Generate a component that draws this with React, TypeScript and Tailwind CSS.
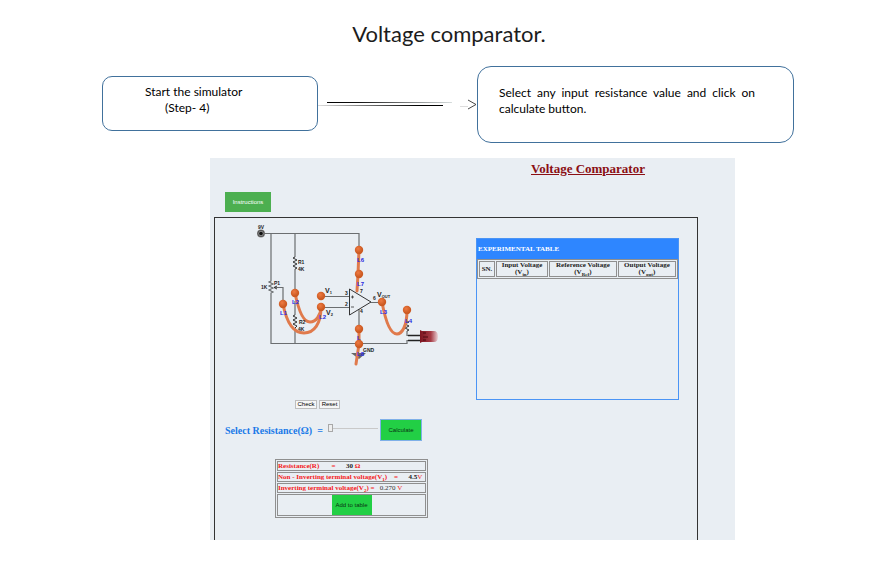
import React, { useState } from 'react';

const serif = "font-['Liberation_Serif',serif]";
const sans = "font-['Liberation_Sans',sans-serif]";
const humanist = "font-['Lato',sans-serif]";

const joints = [
  [359, 250],
  [359, 274],
  [295, 293],
  [283, 304],
  [321, 296],
  [321, 307],
  [382, 302],
  [407, 310],
  [359, 329],
  [359, 344],
];

function FlowArrow() {
  return (
    <svg className="block h-4 w-full" viewBox="318 96 159 16" preserveAspectRatio="none" aria-hidden="true">
      <defs>
        <linearGradient id="fadeOut">
          <stop offset="0" stopColor="#000" />
          <stop offset="0.25" stopColor="#111" />
          <stop offset="1" stopColor="#d8dede" />
        </linearGradient>
        <linearGradient id="fadeIn">
          <stop offset="0" stopColor="#ddd" />
          <stop offset="0.5" stopColor="#555" />
          <stop offset="0.8" stopColor="#000" />
        </linearGradient>
      </defs>
      <rect x="327" y="102" width="125" height="1" fill="url(#fadeOut)" />
      <rect x="318" y="105" width="125" height="1" fill="url(#fadeIn)" />
      <rect x="460" y="106" width="8" height="1" fill="#ddd" />
      <path d="M468 100l8 4.500l-8 4.500" fill="none" stroke="#333" strokeWidth="0.900" />
    </svg>
  );
}

function Circuit() {
  return (
    <svg
      className="block h-40 w-[200px] font-['Liberation_Sans',sans-serif]"
      viewBox="250 222 200 160"
      role="img"
      aria-label="Voltage comparator circuit"
    >
      <defs>
        <radialGradient id="joint" cx="0.4" cy="0.35">
          <stop offset="0" stopColor="#ee7a42" />
          <stop offset="1" stopColor="#cc5a22" />
        </radialGradient>
        <linearGradient id="led">
          <stop offset="0" stopColor="#7d1420" />
          <stop offset="0.6" stopColor="#a53a44" />
          <stop offset="1" stopColor="#e9d3d8" />
        </linearGradient>
      </defs>

      <g fill="none" stroke="#6b6e70" strokeWidth="1.200">
        <path d="M265 233.500H359V247" />
        <path d="M271 233V281l-2 1l4 2l-4 2l4 2l-4 2l4 2l-2 1V343.500H407V340.500H421" />
        <path d="M274 287.500H283V303" />
        <path d="M295 233V257M295 269V291M295 301V315M295 328V343" />
        <path d="M321 296.500H349M321 307.500H349M371 302.500H380M359 309V343" />
        <path d="M407 313V319M407 331V335.500H421" />
      </g>
      <g fill="none" stroke="#333" strokeWidth="1">
        <path d="M295 257l-2 1l4 2l-4 2l4 2l-4 2l4 2l-2 1" />
        <path d="M295 315l-2 1l4 2l-4 2l4 2l-4 2l4 2l-2 2" />
        <path d="M407 319l-2 1l4 2l-4 2l4 2l-4 2l4 2l-2 1" />
        <path d="M349.500 289V315L371 302Z" />
        <path d="M351 297h3M351 307h3M352.500 295.500v3" strokeWidth="0.800" />
        <path d="M277 286l-3 1.500l3 1.500" />
        <path d="M408 335.500H421M408 340.500H421" stroke="#222" strokeWidth="1.500" />
      </g>

      <circle cx="261" cy="233.500" r="4" fill="#8a8a8a" />
      <circle cx="261" cy="233.500" r="3.200" fill="none" stroke="#444" strokeWidth="0.800" />
      <circle cx="261" cy="233.500" r="1.800" fill="#111" />
      <path d="M351 353H366L359 359Z" fill="#666" />
      <path d="M422 331H434Q438 331 438 336.500Q438 342 434 342H422L420 343V330Z" fill="url(#led)" />
      <path d="M423 333h3M423 337h5M423 340h3" stroke="#4d0910" strokeWidth="1" />

      <g fill="none" stroke="#e07a4c" strokeWidth="3" strokeLinecap="round">
        <path d="M359 250L358 274L357 291" />
        <path d="M295 293C299 313 304 322 310 322C316 322 321 315 321 307" />
        <path d="M283 304C287 325 295 333 304 333C314 333 321 324 321 307" />
        <path d="M382 302C386 324 391 334 397 334C402 334 407 326 407 310" />
        <path d="M359 329V344L356 364" />
      </g>
      <g fill="#2626e0" fontSize="6" fontWeight="bold">
        <text x="357" y="262">L6</text>
        <text x="357" y="286">L7</text>
        <text x="292" y="304">L2</text>
        <text x="280" y="315">L1</text>
        <text x="319" y="319">L2</text>
        <text x="380" y="314">L3</text>
        <text x="405" y="323">L4</text>
        <text x="357" y="340">L</text>
        <text x="357" y="356">L8</text>
      </g>
      {joints.map(([cx, cy]) => (
        <circle key={`${cx}-${cy}`} cx={cx} cy={cy} r="4.200" fill="url(#joint)" />
      ))}

      <g fill="#222" fontSize="5" fontWeight="bold">
        <text x="258" y="229">9V</text>
        <text x="298" y="264">R1</text>
        <text x="298" y="271">4K</text>
        <text x="261" y="289">1K</text>
        <text x="274" y="285">P1</text>
        <text x="299" y="324">R2</text>
        <text x="298" y="331">4K</text>
        <text x="345" y="295">3</text>
        <text x="345" y="306">2</text>
        <text x="360" y="293">7</text>
        <text x="373" y="300">6</text>
        <text x="360" y="313">4</text>
        <text x="363" y="352">GND</text>
      </g>
      <g fill="#222" fontSize="7" fontWeight="bold">
        <text x="325" y="293">V<tspan fontSize="4" dy="1">1</tspan></text>
        <text x="326" y="315">V<tspan fontSize="4" dy="1">2</tspan></text>
        <text x="377" y="297">V<tspan fontSize="4" dy="1">OUT</tspan></text>
      </g>
    </svg>
  );
}

function Sub({ children }: { children: React.ReactNode }) {
  return <sub className="bottom-0 align-sub text-[5px] leading-[0px]">{children}</sub>;
}

const headCell = 'border border-[#8f8f8f] p-0 font-bold';
const resultCell = 'border border-[#8f8f8f] p-0 whitespace-pre';
const smallButton = 'border border-[#bdbdbd] bg-[#f6f6f6] text-[6px] leading-[7px] text-black';
const greenButton = 'h-5 w-10 bg-[#22cf45] text-[6px] text-[#0a3312]';

export default function App() {
  const [resistance, setResistance] = useState(30);

  return (
    <main className="min-h-screen bg-white pb-7 text-black">
      <div className="mx-auto w-full max-w-[884px]">
        <h1 className={`${humanist} pt-5 pl-3.5 text-center text-[22px] leading-7 text-[#1c1c1c]`}>
          Voltage comparator.
        </h1>

        <section className="mt-[18px] flex items-start pr-[90px] pl-[102px]">
          <div className={`${humanist} mt-2.5 h-[55px] w-[216px] rounded-[10px] border border-[#41719c] pt-[7px] pl-[42px] text-[12px] leading-4`}>
            <p>Start the simulator</p>
            <p className="pl-5">(Step- 4)</p>
          </div>
          <div className="mt-[30px] min-w-0 flex-1">
            <FlowArrow />
          </div>
          <div className={`${humanist} h-[77px] w-[317px] rounded-[14px] border border-[#41719c] pt-[18px] pr-[38px] pl-[21px] text-justify text-[12px] leading-4`}>
            Select any input resistance value and click on calculate button.
          </div>
        </section>

        <section className="mt-[15px] mr-[149px] ml-[210px] bg-[#e9eef3] pr-[37px] pl-1">
          <h2 className={`${serif} pt-[3px] pl-[264px] text-center text-[13px] leading-4 font-bold text-[#8b0f14] underline`}>
            Voltage Comparator
          </h2>
          <button type="button" className={`${sans} mt-[15px] ml-[11px] block h-5 w-[46px] bg-[#4caf50] text-[6px] text-white`}>
            Instructions
          </button>

          <div className="mt-[5px] flex items-start justify-between border-x border-t border-[#333] pr-[18px]">
            <div className="h-[322px] w-[220px] pt-1">
              <div className="pl-[35px]">
                <Circuit />
              </div>
              <div className={`${sans} mt-[18px] flex gap-0.5 pl-20`}>
                <button type="button" className={`${smallButton} w-[22px]`}>Check</button>
                <button type="button" className={`${smallButton} w-[21px]`}>Reset</button>
              </div>

              <div className="mt-[11px] flex items-center pl-2.5">
                <label htmlFor="resistance" className={`${serif} flex w-[98px] justify-between text-[10px] font-bold text-[#1a7ae8]`}>
                  <span>Select Resistance(Ω)</span>
                  <span>=</span>
                </label>
                <input
                  id="resistance"
                  type="range"
                  min={30}
                  max={100}
                  value={resistance}
                  onChange={(e) => setResistance(Number(e.target.value))}
                  className="mb-1 ml-[5px] h-2 w-[50px] appearance-none bg-transparent [&::-webkit-slider-runnable-track]:h-px [&::-webkit-slider-runnable-track]:bg-[#c9c9c9] [&::-webkit-slider-thumb]:-mt-1 [&::-webkit-slider-thumb]:h-2 [&::-webkit-slider-thumb]:w-[5px] [&::-webkit-slider-thumb]:appearance-none [&::-webkit-slider-thumb]:border [&::-webkit-slider-thumb]:border-[#a8a8a8] [&::-webkit-slider-thumb]:bg-[#eeeeee]"
                />
                <button type="button" className={`${sans} ${greenButton} ml-[3px] outline outline-[#7fb0e8]`}>Calculate</button>
              </div>

              <table className={`${serif} mt-[19px] ml-[60px] w-[153px] border-separate border-spacing-px border border-[#8f8f8f] text-[7px] leading-[8px] text-[#f51820]`}>
                <tbody>
                  <tr>
                    <td className={`${resultCell} font-bold`}>
                      {'Resistance(R)       =      '}
                      <span className="text-[#222]">{resistance}</span> Ω
                    </td>
                  </tr>
                  <tr>
                    <td className={`${resultCell} font-bold`}>
                      Non - Inverting terminal voltage(V<Sub>1</Sub>){'    =      '}
                      <span className="text-[#222]">4.5</span>
                      <span className="font-normal">V</span>
                    </td>
                  </tr>
                  <tr>
                    <td className={resultCell}>
                      <b>Inverting terminal voltage(V<Sub>2</Sub>) = </b>
                      <span className="text-[#333]">{'  0.270'}</span> V
                    </td>
                  </tr>
                  <tr>
                    <td className={resultCell}>
                      <button type="button" className={`${sans} ${greenButton} mx-auto block`}>Add to table</button>
                    </td>
                  </tr>
                </tbody>
              </table>
            </div>

            <div className={`${serif} mt-5 h-[162px] w-[203px] border border-[#4a94f5]`}>
              <h3 className="bg-[#2e86ff] pt-1.5 pb-[5px] pl-px text-[7px] leading-[9px] font-bold text-white">
                EXPERIMENTAL TABLE
              </h3>
              <table className="w-full border-separate border-spacing-px border border-[#8f8f8f] text-center text-[7px] leading-[7px] text-[#222]">
                <thead>
                  <tr>
                    <th className={`${headCell} w-4`}>SN.</th>
                    <th className={headCell}>Input Voltage<br />(V<Sub>in</Sub>)</th>
                    <th className={headCell}>Reference Voltage<br />(V<Sub>Ref</Sub>)</th>
                    <th className={headCell}>Output Voltage<br />(V<Sub>out</Sub>)</th>
                  </tr>
                </thead>
              </table>
            </div>
          </div>
        </section>
      </div>
    </main>
  );
}
